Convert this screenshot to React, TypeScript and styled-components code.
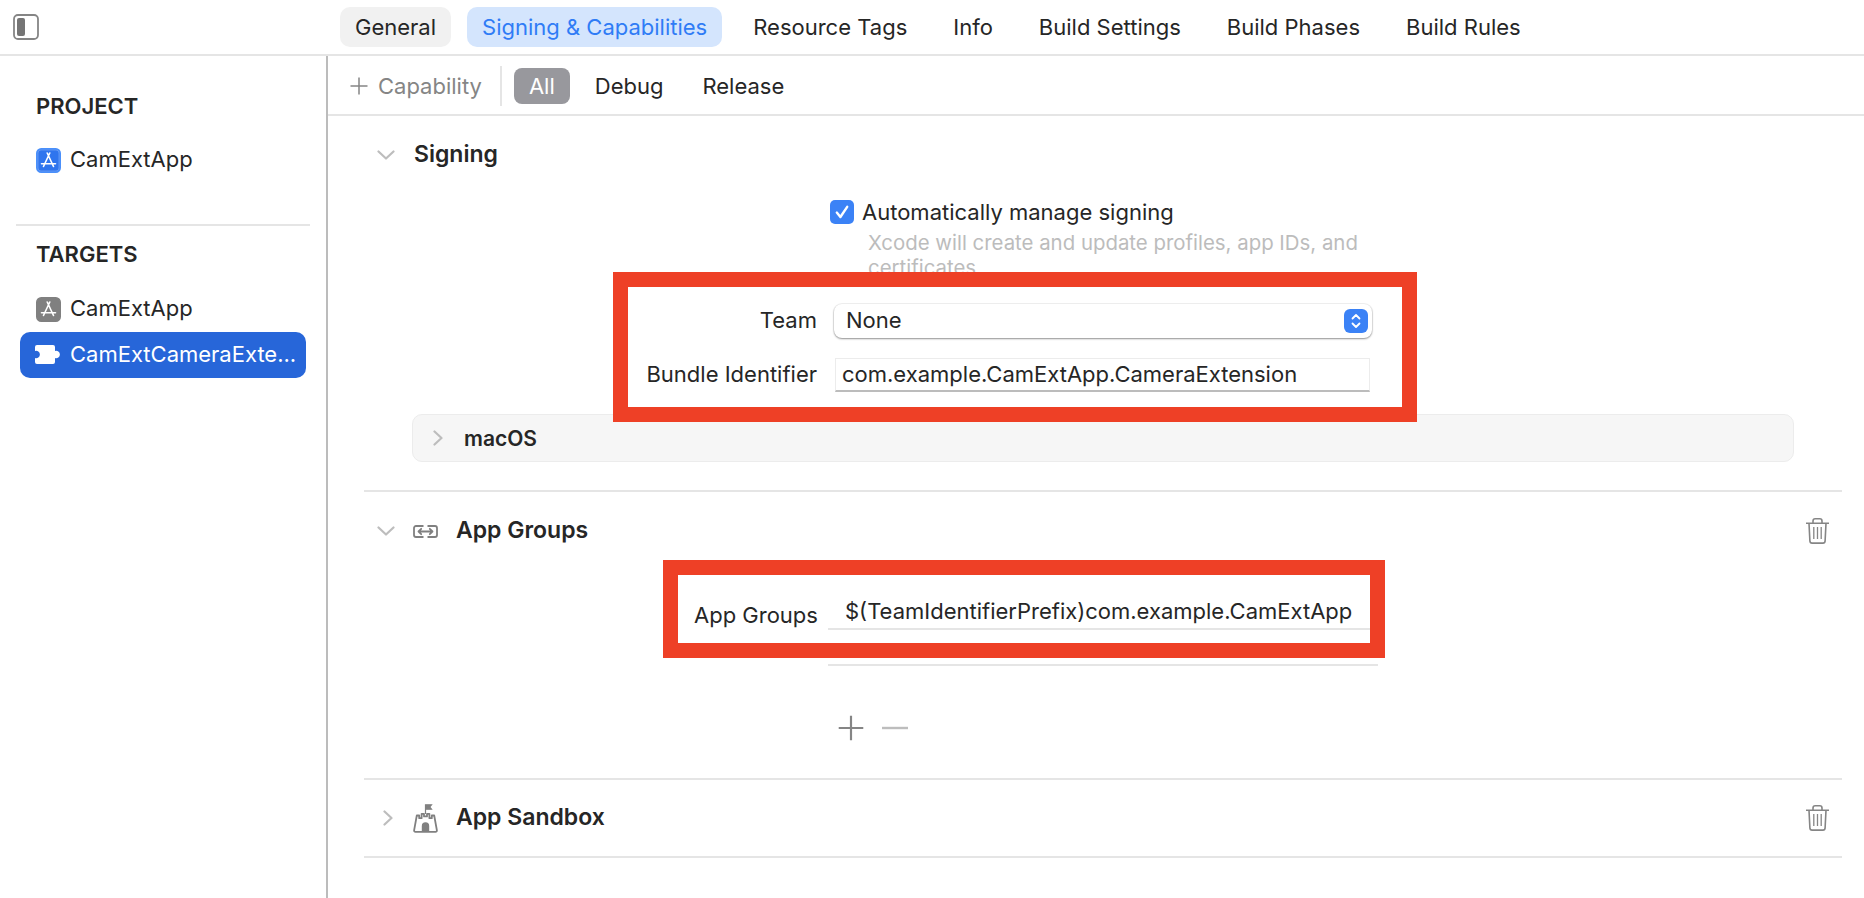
import React from "react";
import styled, { createGlobalStyle } from "styled-components";

const GlobalStyle = createGlobalStyle`
  html, body {
    margin: 0;
    padding: 0;
    background: #ffffff;
    font-family: Inter, "Liberation Sans", sans-serif;
    color: #262626;
    overflow: hidden;
  }
  * {
    box-sizing: border-box;
  }
`;

const tabs = [
  "General",
  "Signing & Capabilities",
  "Resource Tags",
  "Info",
  "Build Settings",
  "Build Phases",
  "Build Rules",
];

const AppStoreIcon = ({ color }: { color: "blue" | "gray" }) => (
  <svg width="25" height="25" viewBox="0 0 25 25" fill="none">
    <rect
      x="0.75"
      y="0.75"
      width="23.5"
      height="23.5"
      rx="4.5"
      fill={color === "blue" ? "#2f75ee" : "#808080"}
      stroke={color === "blue" ? "#4a90fb" : "#808080"}
      strokeWidth="1.5"
    />
    {color === "blue" && (
      <rect x="2" y="2" width="21" height="21" rx="3" stroke="#ffffff" strokeOpacity="0.3" strokeWidth="0.8" />
    )}
    <path
      d="M11.2 5 L17.5 18.5 M13.8 5 L7.5 18.5 M5.5 15.8 H19.5"
      stroke="#fff"
      strokeWidth="1.6"
      strokeLinecap="round"
    />
  </svg>
);

const PuzzleIcon = () => (
  <svg width="26" height="20" viewBox="0 0 26 20" fill="none">
    <path
      d="M2 0 H18 A2 2 0 0 1 20 2 V6 A3.7 3.7 0 1 1 20 13 V17 A2 2 0 0 1 18 19 H2 A2 2 0 0 1 0 17 V13 A3.7 3.7 0 1 0 0 6 V2 A2 2 0 0 1 2 0 Z"
      fill="#fff"
    />
  </svg>
);

const SidebarToggleIcon = () => (
  <svg width="26" height="26" viewBox="0 0 26 26" fill="none">
    <rect x="1" y="1" width="24" height="24" rx="4" stroke="#858585" strokeWidth="1.8" />
    <rect x="4" y="4" width="8" height="18" rx="2" fill="#757575" />
  </svg>
);

const ChevronDown = () => (
  <svg width="18" height="10" viewBox="0 0 18 10" fill="none">
    <path d="M1.5 1.5 L9 8.5 L16.5 1.5" stroke="#bdbdbd" strokeWidth="2.2" strokeLinecap="round" strokeLinejoin="round" />
  </svg>
);

const ChevronRight = () => (
  <svg width="10" height="16" viewBox="0 0 10 16" fill="none">
    <path d="M1.5 1.5 L8.5 8 L1.5 14.5" stroke="#bdbdbd" strokeWidth="2.2" strokeLinecap="round" strokeLinejoin="round" />
  </svg>
);

const LinkIcon = () => (
  <svg width="25" height="13" viewBox="0 0 25 13" fill="none">
    <path
      d="M10.5 1 H3 A2 2 0 0 0 1 3 V10 A2 2 0 0 0 3 12 H10.5 M14.5 1 H22 A2 2 0 0 1 24 3 V10 A2 2 0 0 1 22 12 H14.5"
      stroke="#808080"
      strokeWidth="1.8"
    />
    <path
      d="M5.5 6.5 H19.5 M8.2 3.8 L5.5 6.5 L8.2 9.2 M16.8 3.8 L19.5 6.5 L16.8 9.2"
      stroke="#808080"
      strokeWidth="1.8"
      strokeLinecap="round"
      strokeLinejoin="round"
    />
  </svg>
);

const CastleIcon = () => (
  <svg width="25" height="29" viewBox="0 0 25 29" fill="none">
    <path
      d="M2.5 27.8 A1.3 1.3 0 0 1 1.1 26.3 L3.8 11.5 H6.2 V14.2 H8.6 V9.8 H11 V12.4 H14 V9.8 H16.4 V14.2 H18.8 V11.5 H21.2 L23.9 26.3 A1.3 1.3 0 0 1 22.5 27.8 Z"
      stroke="#808080"
      strokeWidth="1.8"
      strokeLinejoin="round"
    />
    <path d="M8.8 27.8 V22 A3.7 3.7 0 0 1 16.2 22 V27.8 Z" fill="#808080" />
    <path d="M12.5 10 V0.8 M12.5 0.8 H18.5 L16.8 3 L18.5 5.2 H12.5 Z" stroke="#808080" strokeWidth="1.2" fill="#808080" />
  </svg>
);

const TrashIcon = () => (
  <svg width="23" height="26" viewBox="0 0 23 26" fill="none">
    <path d="M0.5 5.2 H22.5" stroke="#858585" strokeWidth="1.6" strokeLinecap="round" />
    <path d="M7 5 V3 A2.2 2.2 0 0 1 9.2 0.8 H13.8 A2.2 2.2 0 0 1 16 3 V5" stroke="#858585" strokeWidth="1.6" />
    <path
      d="M3 5.2 L3.9 23 A2.2 2.2 0 0 0 6.1 25.1 H16.9 A2.2 2.2 0 0 0 19.1 23 L20 5.2"
      stroke="#858585"
      strokeWidth="1.6"
    />
    <path d="M7.8 9 V21 M11.5 9 V21 M15.2 9 V21" stroke="#858585" strokeWidth="1.3" />
  </svg>
);

const PlusIcon = ({ size }: { size: number }) => (
  <svg width={size} height={size} viewBox="0 0 18 18" fill="none">
    <path d="M9 0.5 V17.5 M0.5 9 H17.5" stroke="#858585" strokeWidth="1.5" />
  </svg>
);

const MinusIcon = () => (
  <svg width="26" height="4" viewBox="0 0 26 4" fill="none">
    <path d="M0 2 H26" stroke="#bdbdbd" strokeWidth="2.4" />
  </svg>
);

const StepperIcon = () => (
  <svg width="12" height="18" viewBox="0 0 12 18" fill="none">
    <path
      d="M2.5 6.5 L6 3 L9.5 6.5 M2.5 11.5 L6 15 L9.5 11.5"
      stroke="#fff"
      strokeWidth="1.8"
      strokeLinecap="round"
      strokeLinejoin="round"
    />
  </svg>
);

const CheckIcon = () => (
  <svg width="16" height="16" viewBox="0 0 16 16" fill="none">
    <path d="M2.8 8.6 L6.4 13 L13.2 2.8" stroke="#fff" strokeWidth="2.4" strokeLinecap="round" strokeLinejoin="round" />
  </svg>
);

export default function App() {
  return (
    <Page>
      <GlobalStyle />
      <TopBar>
        <SidebarToggleIcon />
        <Tabs>
          {tabs.map((tab, i) => (
            <Tab key={tab} $state={i === 0 ? "hover" : i === 1 ? "active" : "idle"}>
              {tab}
            </Tab>
          ))}
        </Tabs>
      </TopBar>
      <Body>
        <Sidebar>
          <SidebarHeading $top={38}>PROJECT</SidebarHeading>
          <SidebarRow $top={19}>
            <AppStoreIcon color="blue" />
            <RowLabel>CamExtApp</RowLabel>
          </SidebarRow>
          <SidebarDivider />
          <SidebarHeading $top={16}>TARGETS</SidebarHeading>
          <SidebarRow $top={20}>
            <AppStoreIcon color="gray" />
            <RowLabel>CamExtApp</RowLabel>
          </SidebarRow>
          <SidebarRow $selected>
            <PuzzleIcon />
            <RowLabel>CamExtCameraExte...</RowLabel>
          </SidebarRow>
        </Sidebar>
        <Main>
          <SubBar>
            <CapabilityButton>
              <PlusIcon size={18} />
              Capability
            </CapabilityButton>
            <SubSeparator />
            <FilterGroup>
              <Filter $active>All</Filter>
              <Filter>Debug</Filter>
              <Filter>Release</Filter>
            </FilterGroup>
          </SubBar>

          <SigningSection>
            <SectionHeader>
              <ChevronSlot>
                <ChevronDown />
              </ChevronSlot>
              <SectionTitle $left={19}>Signing</SectionTitle>
            </SectionHeader>
            <CheckRow>
              <Checkbox>
                <CheckIcon />
              </Checkbox>
              Automatically manage signing
            </CheckRow>
            <Hint>Xcode will create and update profiles, app IDs, and certificates.</Hint>
            <TeamBox>
              <FormRow>
                <FieldLabel>Team</FieldLabel>
                <Select>
                  <SelectValue>None</SelectValue>
                  <SelectStepper>
                    <StepperIcon />
                  </SelectStepper>
                </Select>
              </FormRow>
              <FormRow>
                <FieldLabel>Bundle Identifier</FieldLabel>
                <TextField>com.example.CamExtApp.CameraExtension</TextField>
              </FormRow>
            </TeamBox>
            <PlatformPanel>
              <ChevronRight />
              <PlatformName>macOS</PlatformName>
            </PlatformPanel>
          </SigningSection>

          <GroupsSection>
            <SectionHeader>
              <ChevronSlot>
                <ChevronDown />
              </ChevronSlot>
              <CapabilityIcon>
                <LinkIcon />
              </CapabilityIcon>
              <SectionTitle $left={18}>App Groups</SectionTitle>
              <TrashSlot>
                <TrashIcon />
              </TrashSlot>
            </SectionHeader>
            <GroupsBox>
              <GroupLabel>App Groups</GroupLabel>
              <GroupValue>$(TeamIdentifierPrefix)com.example.CamExtApp</GroupValue>
            </GroupsBox>
            <ListEnd />
            <ListActions>
              <PlusIcon size={26} />
              <MinusIcon />
            </ListActions>
          </GroupsSection>

          <SandboxSection>
            <ChevronSlot $collapsed>
              <ChevronRight />
            </ChevronSlot>
            <CapabilityIcon>
              <CastleIcon />
            </CapabilityIcon>
            <SectionTitle $left={18}>App Sandbox</SectionTitle>
            <TrashSlot>
              <TrashIcon />
            </TrashSlot>
          </SandboxSection>
        </Main>
      </Body>
    </Page>
  );
}

const Page = styled.div`
  width: 1864px;
  height: 898px;
  display: flex;
  flex-direction: column;
  overflow: hidden;
  font-size: 22px;
`;

const TopBar = styled.div`
  height: 56px;
  flex: none;
  display: flex;
  align-items: center;
  padding-left: 13px;
  border-bottom: 2px solid #e5e5e5;
`;

const Tabs = styled.div`
  display: flex;
  gap: 16px;
  margin-left: 301px;
`;

const Tab = styled.div<{ $state: "hover" | "active" | "idle" }>`
  height: 40px;
  padding: 0 15px;
  display: flex;
  align-items: center;
  border-radius: 10px;
  white-space: nowrap;
  color: ${(p) => (p.$state === "active" ? "#2f7cf6" : "#262626")};
  background: ${(p) =>
    p.$state === "active" ? "#d4e5fd" : p.$state === "hover" ? "#f1f1f1" : "transparent"};
`;

const Body = styled.div`
  flex: 1;
  display: flex;
  min-height: 0;
`;

const Sidebar = styled.div`
  width: 328px;
  flex: none;
  border-right: 2px solid #bcbcbc;
`;

const SidebarHeading = styled.div<{ $top: number }>`
  height: 24px;
  line-height: 24px;
  margin-top: ${(p) => p.$top}px;
  padding-left: 36px;
  font-weight: 600;
  color: #262626;
`;

const SidebarRow = styled.div<{ $top?: number; $selected?: boolean }>`
  height: 46px;
  width: 286px;
  margin: ${(p) => p.$top || 0}px 0 0 20px;
  padding-left: ${(p) => (p.$selected ? 15 : 16)}px;
  display: flex;
  align-items: center;
  border-radius: 10px;
  background: ${(p) => (p.$selected ? "#2766d9" : "transparent")};
  color: ${(p) => (p.$selected ? "#ffffff" : "#262626")};
`;

const RowLabel = styled.span`
  margin-left: 9px;
  padding-bottom: 2px;
  white-space: nowrap;
`;

const SidebarDivider = styled.div`
  height: 2px;
  width: 294px;
  margin: 41px 0 0 16px;
  background: #e5e5e5;
`;

const Main = styled.div`
  flex: 1;
  min-width: 0;
`;

const SubBar = styled.div`
  height: 60px;
  display: flex;
  align-items: center;
  padding: 2px 0 0 22px;
  border-bottom: 2px solid #e5e5e5;
`;

const CapabilityButton = styled.div`
  display: flex;
  align-items: center;
  gap: 10px;
  color: #858585;
`;

const SubSeparator = styled.div`
  width: 2px;
  height: 40px;
  margin: 0 12px 0 18px;
  background: #e5e5e5;
`;

const FilterGroup = styled.div`
  display: flex;
  gap: 11px;
`;

const Filter = styled.div<{ $active?: boolean }>`
  height: 36px;
  padding: 0 ${(p) => (p.$active ? 15 : 14)}px;
  display: flex;
  align-items: center;
  border-radius: 8px;
  background: ${(p) => (p.$active ? "#98989d" : "transparent")};
  color: ${(p) => (p.$active ? "#ffffff" : "#262626")};
`;

const Section = styled.section`
  margin: 0 22px 0 36px;
  border-bottom: 2px solid #e5e5e5;
`;

const SigningSection = styled(Section)`
  padding: 19px 0 28px;
`;

const GroupsSection = styled(Section)`
  padding: 19px 0 37px;
`;

const SandboxSection = styled(Section)`
  height: 78px;
  display: flex;
  align-items: center;
`;

const SectionHeader = styled.div`
  height: 40px;
  display: flex;
  align-items: center;
`;

const ChevronSlot = styled.div<{ $collapsed?: boolean }>`
  width: 18px;
  margin-left: ${(p) => (p.$collapsed ? 19 : 13)}px;
  margin-right: ${(p) => (p.$collapsed ? -6 : 0)}px;
  display: flex;
  align-items: center;
`;

const CapabilityIcon = styled.div`
  width: 25px;
  margin-left: 18px;
  display: flex;
  justify-content: center;
`;

const SectionTitle = styled.div<{ $left: number }>`
  margin-left: ${(p) => p.$left}px;
  padding-bottom: 2px;
  font-weight: 600;
  font-size: 23px;
  color: #262626;
`;

const TrashSlot = styled.div`
  margin-left: auto;
  margin-right: 13px;
  display: flex;
`;

const CheckRow = styled.div`
  height: 24px;
  margin: 25px 0 0 466px;
  display: flex;
  align-items: center;
  gap: 8px;
`;

const Checkbox = styled.div`
  width: 24px;
  height: 24px;
  display: flex;
  align-items: center;
  justify-content: center;
  border-radius: 5px;
  background: #3b82f6;
`;

const Hint = styled.div`
  width: 510px;
  height: 42px;
  margin: 6px 0 0 504px;
  overflow: hidden;
  line-height: 25px;
  font-size: 20.4px;
  color: #bcbcbc;
`;

const RedBox = styled.div`
  position: relative;
  z-index: 1;
  border: 15px solid #ee4026;
  background: #ffffff;
`;

const TeamBox = styled(RedBox)`
  width: 804px;
  height: 150px;
  margin-left: 249px;
  padding-top: 17px;
  display: flex;
  flex-direction: column;
  gap: 20px;
`;

const FormRow = styled.div`
  display: flex;
  align-items: center;
`;

const FieldLabel = styled.div`
  width: 189px;
  flex: none;
  padding-bottom: 2px;
  text-align: right;
  white-space: nowrap;
`;

const Select = styled.div`
  width: 538px;
  height: 34px;
  margin-left: 17px;
  padding: 0 4px 0 12px;
  display: flex;
  align-items: center;
  justify-content: space-between;
  border-radius: 8px;
  background: #ffffff;
  box-shadow: 0 1px 2px rgba(0, 0, 0, 0.4), 0 0 0 1px rgba(0, 0, 0, 0.05);
`;

const SelectValue = styled.span`
  padding-bottom: 2px;
`;

const SelectStepper = styled.div`
  width: 24px;
  height: 24px;
  display: flex;
  align-items: center;
  justify-content: center;
  border-radius: 6px;
  background: #3b82f6;
`;

const TextField = styled.div`
  width: 535px;
  height: 34px;
  margin-left: 18px;
  padding: 0 0 2px 6px;
  display: flex;
  align-items: center;
  white-space: nowrap;
  border: 1px solid #ececec;
  border-bottom: 2px solid #bcbcbc;
`;

const PlatformPanel = styled.div`
  height: 48px;
  margin: -8px 48px 0;
  padding-left: 20px;
  display: flex;
  align-items: center;
  border: 1px solid #ececec;
  border-radius: 10px;
  background: #f6f6f6;
`;

const PlatformName = styled.span`
  margin-left: 21px;
  font-weight: 600;
  font-size: 21px;
`;

const GroupsBox = styled(RedBox)`
  width: 722px;
  height: 98px;
  margin: 9px 0 0 299px;
  padding: 22px 0 0 16px;
  display: flex;
  align-items: flex-start;
`;

const GroupLabel = styled.div`
  width: 123px;
  flex: none;
  padding-top: 5px;
  white-space: nowrap;
`;

const GroupValue = styled.div`
  flex: 1;
  height: 33px;
  margin-left: 11px;
  padding: 0 0 3px 17px;
  display: flex;
  align-items: center;
  white-space: nowrap;
  border-bottom: 2px solid #e5e5e5;
`;

const ListEnd = styled.div`
  width: 550px;
  height: 2px;
  margin: 6px 0 0 464px;
  background: #e5e5e5;
`;

const ListActions = styled.div`
  height: 26px;
  margin: 49px 0 0 474px;
  display: flex;
  align-items: center;
  gap: 18px;
`;
